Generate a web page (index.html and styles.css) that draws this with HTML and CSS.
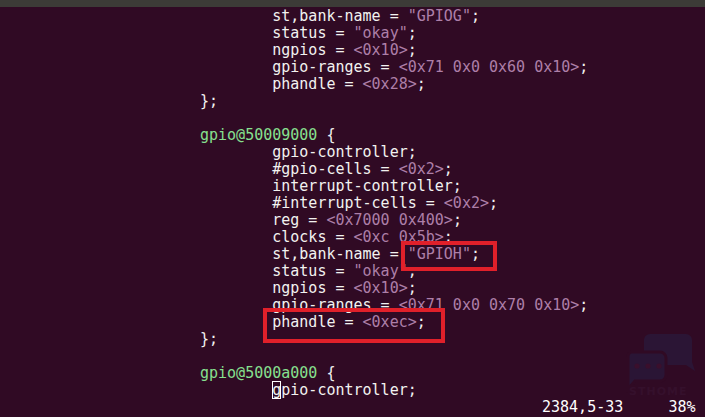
FILE: index.html
```html
<!DOCTYPE html>
<html>
<head>
<meta charset="utf-8">
<link rel="stylesheet" href="styles.css">
</head>
<body>
<div class="term">
  <div class="titlebar"></div>
  <div class="code">
    <div class="ln">        st,bank-name = <span class="s">"GPIOG"</span>;</div>
    <div class="ln">        status = <span class="s">"okay"</span>;</div>
    <div class="ln">        ngpios = <span class="s">&lt;0x10&gt;</span>;</div>
    <div class="ln">        gpio-ranges = <span class="s">&lt;0x71 0x0 0x60 0x10&gt;</span>;</div>
    <div class="ln">        phandle = <span class="s">&lt;0x28&gt;</span>;</div>
    <div class="ln">};</div>
    <div class="ln"> </div>
    <div class="ln"><span class="g">gpio@50009000</span> {</div>
    <div class="ln">        gpio-controller;</div>
    <div class="ln">        #gpio-cells = <span class="s">&lt;0x2&gt;</span>;</div>
    <div class="ln">        interrupt-controller;</div>
    <div class="ln">        #interrupt-cells = <span class="s">&lt;0x2&gt;</span>;</div>
    <div class="ln">        reg = <span class="s">&lt;0x7000 0x400&gt;</span>;</div>
    <div class="ln">        clocks = <span class="s">&lt;0xc 0x5b&gt;</span>;</div>
    <div class="ln">        st,bank-name = <span class="mark mark1"><span class="s">"GPIOH"</span>;</span></div>
    <div class="ln">        status = <span class="s">"okay"</span>;</div>
    <div class="ln">        ngpios = <span class="s">&lt;0x10&gt;</span>;</div>
    <div class="ln">        gpio-ranges = <span class="s">&lt;0x71 0x0 0x70 0x10&gt;</span>;</div>
    <div class="ln">        <span class="mark mark2">phandle = <span class="s">&lt;0xec&gt;</span>;</span></div>
    <div class="ln">};</div>
    <div class="ln"> </div>
    <div class="ln"><span class="g">gpio@5000a000</span> {</div>
    <div class="ln">        <span class="cursor">g</span>pio-controller;</div>
  </div>
  <div class="status">2384,5-33     38%</div>
  <div class="wm">
    <svg width="80" height="70" viewBox="0 0 80 70">
      <path d="M30 4 h36 a6 6 0 0 1 6 6 v22 l3 9 l-9 -6 h-36 a6 6 0 0 1 -6 -6 v-19 a6 6 0 0 1 6 -6z" fill="#2b1535"/>
      <path d="M11 22 h29 a6 6 0 0 1 6 6 v17 a6 6 0 0 1 -6 6 h-25 l-7 8 v-31 a6 6 0 0 1 3 -6z" fill="#2a1535" stroke="#300a24" stroke-width="3"/>
      <circle cx="17" cy="36" r="2.6" fill="#3a0f2c"/>
      <circle cx="28" cy="36" r="2.6" fill="#3a0f2c"/>
      <circle cx="39" cy="36" r="2.6" fill="#3a0f2c"/>
    </svg>
    <span class="wm-text">STHOME</span>
  </div>
</div>
</body>
</html>
```

FILE: styles.css
```css
html, body {
  margin: 0;
  padding: 0;
  background: #300a24;
}
.term {
  position: relative;
  width: 705px;
  height: 417px;
  overflow: hidden;
  background: #300a24;
  font-family: "DejaVu Sans Mono", monospace;
  font-size: 15px;
  color: #f2f2f0;
}
.titlebar {
  height: 7px;
  background: #3c3b37;
}
.code {
  padding-top: 1px;
  padding-left: 200px;
}
.ln {
  height: 17px;
  line-height: 17px;
  white-space: pre;
}
.s {
  color: #ad7fa8;
}
.g {
  color: #87e08f;
}
.mark {
  position: relative;
}
.mark::after {
  content: "";
  position: absolute;
  border: 4px solid #e0202a;
}
.mark1::after {
  left: -7px;
  right: -17px;
  top: -4px;
  bottom: -8px;
}
.mark2::after {
  left: -9px;
  right: -19px;
  top: -5px;
  bottom: -12px;
}
.cursor {
  outline: 1px solid #ffffff;
  outline-offset: -1px;
}
.status {
  position: relative;
  z-index: 1;
  height: 17px;
  line-height: 17px;
  padding-left: 542px;
  white-space: pre;
  color: #ffffff;
}
.wm {
  position: absolute;
  left: 620px;
  top: 330px;
  width: 84px;
  height: 72px;
}
.wm svg {
  display: block;
}
.wm-text {
  position: absolute;
  left: 9px;
  top: 56px;
  font-family: "DejaVu Sans", sans-serif;
  font-size: 11px;
  line-height: 12px;
  font-weight: bold;
  color: #35102c;
  letter-spacing: 1px;
}
```
